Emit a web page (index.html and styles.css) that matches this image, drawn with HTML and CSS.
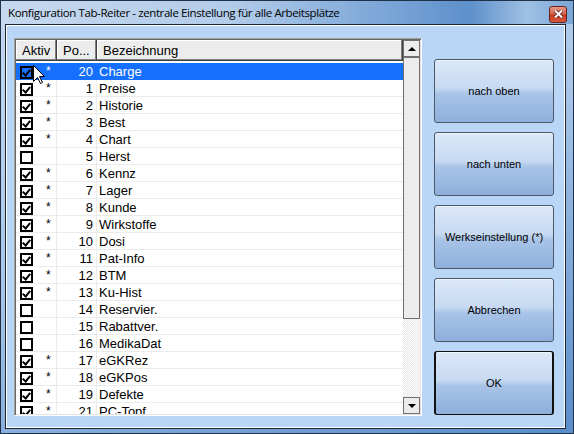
FILE: index.html
```html
<!DOCTYPE html>
<html lang="de">
  <head>
    <meta charset="UTF-8" />
    <title>Konfiguration Tab-Reiter</title>
    <link rel="stylesheet" href="styles.css">
  </head>
  <body>
    <div class="window">
      <div class="titlebar">
        <span class="title">Konfiguration Tab-Reiter - zentrale Einstellung für alle Arbeitsplätze</span>
        <span class="close">
          <svg width="9" height="8" viewBox="0 0 9 8"><path d="M1 0.5 L8 7.5 M8 0.5 L1 7.5" stroke="#5a1a10" stroke-width="3.4"/><path d="M1 0.5 L8 7.5 M8 0.5 L1 7.5" stroke="#fff" stroke-width="2"/></svg>
        </span>
      </div>

      <div class="client">
        <div class="listview">
          <div class="grid">
            <div class="header">
              <div class="hcell">Aktiv</div>
              <div class="hcell">Po...</div>
              <div class="hcell">Bezeichnung</div>
            </div>
            <div class="rows">
              <div class="row selected"><div class="cell aktiv"><span class="cb on"></span><span class="star">*</span></div><div class="cell pos">20</div><div class="cell name">Charge</div></div>
              <div class="row"><div class="cell aktiv"><span class="cb on"></span><span class="star">*</span></div><div class="cell pos">1</div><div class="cell name">Preise</div></div>
              <div class="row"><div class="cell aktiv"><span class="cb on"></span><span class="star">*</span></div><div class="cell pos">2</div><div class="cell name">Historie</div></div>
              <div class="row"><div class="cell aktiv"><span class="cb on"></span><span class="star">*</span></div><div class="cell pos">3</div><div class="cell name">Best</div></div>
              <div class="row"><div class="cell aktiv"><span class="cb on"></span><span class="star">*</span></div><div class="cell pos">4</div><div class="cell name">Chart</div></div>
              <div class="row"><div class="cell aktiv"><span class="cb"></span></div><div class="cell pos">5</div><div class="cell name">Herst</div></div>
              <div class="row"><div class="cell aktiv"><span class="cb on"></span><span class="star">*</span></div><div class="cell pos">6</div><div class="cell name">Kennz</div></div>
              <div class="row"><div class="cell aktiv"><span class="cb on"></span><span class="star">*</span></div><div class="cell pos">7</div><div class="cell name">Lager</div></div>
              <div class="row"><div class="cell aktiv"><span class="cb on"></span><span class="star">*</span></div><div class="cell pos">8</div><div class="cell name">Kunde</div></div>
              <div class="row"><div class="cell aktiv"><span class="cb on"></span><span class="star">*</span></div><div class="cell pos">9</div><div class="cell name">Wirkstoffe</div></div>
              <div class="row"><div class="cell aktiv"><span class="cb on"></span><span class="star">*</span></div><div class="cell pos">10</div><div class="cell name">Dosi</div></div>
              <div class="row"><div class="cell aktiv"><span class="cb on"></span><span class="star">*</span></div><div class="cell pos">11</div><div class="cell name">Pat-Info</div></div>
              <div class="row"><div class="cell aktiv"><span class="cb on"></span><span class="star">*</span></div><div class="cell pos">12</div><div class="cell name">BTM</div></div>
              <div class="row"><div class="cell aktiv"><span class="cb on"></span><span class="star">*</span></div><div class="cell pos">13</div><div class="cell name">Ku-Hist</div></div>
              <div class="row"><div class="cell aktiv"><span class="cb"></span></div><div class="cell pos">14</div><div class="cell name">Reservier.</div></div>
              <div class="row"><div class="cell aktiv"><span class="cb"></span></div><div class="cell pos">15</div><div class="cell name">Rabattver.</div></div>
              <div class="row"><div class="cell aktiv"><span class="cb"></span></div><div class="cell pos">16</div><div class="cell name">MedikaDat</div></div>
              <div class="row"><div class="cell aktiv"><span class="cb on"></span><span class="star">*</span></div><div class="cell pos">17</div><div class="cell name">eGKRez</div></div>
              <div class="row"><div class="cell aktiv"><span class="cb on"></span><span class="star">*</span></div><div class="cell pos">18</div><div class="cell name">eGKPos</div></div>
              <div class="row"><div class="cell aktiv"><span class="cb on"></span><span class="star">*</span></div><div class="cell pos">19</div><div class="cell name">Defekte</div></div>
              <div class="row last"><div class="cell aktiv"><span class="cb on"></span><span class="star">*</span></div><div class="cell pos">21</div><div class="cell name">PC-Topf</div></div>
            </div>
          </div>
          <div class="scrollbar">
            <div class="sb-btn"><span class="arrow-up"></span></div>
            <div class="sb-thumb"></div>
            <div class="sb-track"></div>
            <div class="sb-btn"><span class="arrow-down"></span></div>
          </div>
        </div>

        <div class="buttons">
          <button>nach oben</button>
          <button>nach unten</button>
          <button>Werkseinstellung (*)</button>
          <button>Abbrechen</button>
          <button class="default">OK</button>
        </div>
      </div>

      <svg class="cursor" width="13" height="20" viewBox="0 0 13 20">
        <path d="M0.5 0.5 L0.5 16.5 L4.5 12.5 L7.5 18.5 L9.5 17.5 L6.5 11.5 L11.5 11.5 Z" fill="#fff" stroke="#000" stroke-width="1"/>
      </svg>
    </div>
  </body>
</html>
```

FILE: styles.css
```css
body {
  margin: 0;
  padding: 0;
  background: #fff;
}

.window {
  position: relative;
  width: 574px;
  height: 434px;
  box-sizing: border-box;
  border: 1px solid #1f3149;
  background: linear-gradient(160deg, #c6d9ef 0%, #a9c6e8 45%, #5a8dca 100%);
  padding: 0 7px 4px 4px;
  display: flex;
  flex-direction: column;
  overflow: hidden;
}

.titlebar {
  height: 23px;
  flex: none;
  margin: 0 -7px 0 -4px;
  padding: 0 6px 0 7px;
  display: flex;
  align-items: center;
  justify-content: space-between;
  background: linear-gradient(90deg, #c6d8ee 0%, #b3cce9 40%, #7da7d8 66%, #5e90cb 82%, #9fc0e4 92%, #7aa5d6 100%);
}

.title {
  font-family: "Open Sans", "Noto Sans", sans-serif;
  font-size: 11.5px;
  letter-spacing: -0.4px;
  color: #000;
  margin-top: -1px;
}

.close {
  width: 16px;
  height: 15px;
  margin-top: 3px;
  border: 1px solid #6b2316;
  border-radius: 3px;
  background: linear-gradient(#e79a88, #d4644d 45%, #c23a22 55%, #d45a40);
  display: flex;
  align-items: center;
  justify-content: center;
}

.client {
  flex: 1;
  border: 1px solid #1d2733;
  box-shadow: inset 0 0 0 1px #fff;
  background: #b9d6f6;
  padding: 13px 0 0 8px;
  display: flex;
  align-items: flex-start;
}

/* list view */
.listview {
  width: 408px;
  height: 378px;
  box-sizing: border-box;
  padding: 1px;
  border: 1px solid;
  border-color: #a0a0a0 #fff #fff #a0a0a0;
  box-shadow: inset 1px 1px #696969, inset -1px -1px #e3e3e3;
  display: flex;
  font-family: "Liberation Sans", Arial, sans-serif;
  font-size: 13px;
  color: #000;
}

.grid {
  width: 387px;
  height: 374px;
  overflow: hidden;
  background: #fff;
}

.header {
  display: grid;
  grid-template-columns: 41px 40px 1fr;
  height: 21px;
  background: #ececec;
}

.hcell {
  box-sizing: border-box;
  padding: 1px 0 0 6px;
  line-height: 19px;
  border-right: 1px solid #404040;
  border-bottom: 1px solid #404040;
  box-shadow: inset -1px -1px #808080, inset 1px 1px #fff;
}

.rows {
  padding-top: 2px;
}

.row {
  display: grid;
  grid-template-columns: 41px 40px 1fr;
  height: 17px;
  box-sizing: border-box;
  border-bottom: 1px solid #ebebeb;
}

.cell {
  line-height: 16px;
  padding-top: 1px;
  border-right: 1px solid #ebebeb;
  white-space: nowrap;
}

.cell.name {
  border-right: none;
  padding-left: 2px;
}

.cell.pos {
  text-align: right;
  padding-right: 3px;
}

.cell.aktiv {
  padding-top: 0;
  display: flex;
  align-items: flex-start;
}

.row.selected {
  background: #1570ff;
  color: #fff;
  border-bottom-color: #1570ff;
}

.row.selected .cell {
  border-right-color: #1570ff;
}

.cb {
  position: relative;
  width: 13px;
  height: 13px;
  box-sizing: border-box;
  margin: 3px 0 0 4px;
  border: 2px solid #000;
  background: #fff;
}

.cb.on::after {
  content: "";
  position: absolute;
  left: 2px;
  top: 0px;
  width: 3px;
  height: 6px;
  border-right: 2px solid #000;
  border-bottom: 2px solid #000;
  transform: rotate(40deg);
}

.row.selected .cb {
  background: #1570ff;
}

.star {
  margin: 1px 0 0 13px;
  font-size: 12px;
  line-height: 14px;
}

/* scroll bar */
.scrollbar {
  width: 17px;
  height: 374px;
  display: flex;
  flex-direction: column;
}

.sb-btn, .sb-thumb {
  box-sizing: border-box;
  border: 1px solid #707070;
  background: #ececec;
}

.sb-btn {
  height: 17px;
  display: flex;
  align-items: center;
  justify-content: center;
}

.sb-thumb {
  height: 262px;
}

.sb-track {
  flex: 1;
  background: repeating-conic-gradient(#e6e6e6 0 25%, #fff 0 50%) 0 0 / 2px 2px;
}

.arrow-up {
  border-left: 4px solid transparent;
  border-right: 4px solid transparent;
  border-bottom: 4px solid #000;
}

.arrow-down {
  border-left: 4px solid transparent;
  border-right: 4px solid transparent;
  border-top: 4px solid #000;
}

/* buttons */
.buttons {
  margin: 21px 0 0 12px;
  display: flex;
  flex-direction: column;
  gap: 9px;
}

button {
  width: 120px;
  height: 64px;
  border: 1px solid #4c5866;
  border-radius: 3px;
  background: linear-gradient(#dbe8f8 0%, #c7daf2 45%, #a8c3e7 55%, #8eafdc 100%);
  box-shadow: inset 0 1px #eef5fd;
  font-family: "Liberation Sans", Arial, sans-serif;
  font-size: 11px;
  color: #000;
  padding: 0;
}

button.default {
  border-width: 1px 2px;
  border-color: #111;
}

.cursor {
  position: absolute;
  left: 32px;
  top: 64px;
}
```
